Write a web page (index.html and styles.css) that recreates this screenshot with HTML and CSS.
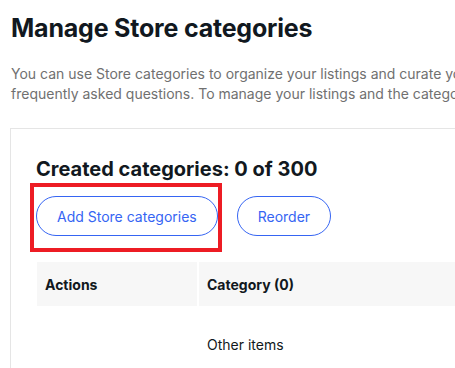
FILE: index.html
```html
<!DOCTYPE html>
<html lang="en">
<head>
    <meta charset="UTF-8">
    <meta name="viewport" content="width=device-width, initial-scale=1.0">
    <title>Manage Store categories</title>
    <link rel="stylesheet" href="styles.css">
</head>
<body>

    <div class="page">
        <h1 class="title">Manage Store categories</h1>
        <p class="intro">You can use Store categories to organize your listings and curate your Store with answers to<br>frequently asked questions. To manage your listings and the categories they appear in, go to Seller Hub.</p>

        <div class="card">
            <h2 class="count">Created categories: 0 of 300</h2>
            <div class="actions-bar">
                <span class="highlight">
                    <button class="pill">Add Store categories</button>
                </span>
                <button class="pill">Reorder</button>
            </div>

            <table class="cat-table">
                <thead>
                    <tr>
                        <th class="col-actions">Actions</th>
                        <th>Category (0)</th>
                    </tr>
                </thead>
                <tbody>
                    <tr>
                        <td></td>
                        <td>Other items</td>
                    </tr>
                </tbody>
            </table>
        </div>
    </div>

</body>
</html>
```

FILE: styles.css
```css
body {
    font-family: Inter, "Liberation Sans", sans-serif;
    background-color: #ffffff;
    color: #111820;
    margin: 0;
    padding: 0;
    overflow: hidden;
}
.page {
    padding: 0 0 0 10px;
    width: 700px;
}
.title {
    font-size: 25px;
    font-weight: 700;
    line-height: 32px;
    margin: 12px 0 0 1px;
    letter-spacing: -0.2px;
}
.intro {
    font-size: 14px;
    line-height: 20px;
    color: #707070;
    margin: 20px 0 0 1px;
    white-space: nowrap;
}
.card {
    border: 1px solid #e5e5e5;
    border-right: none;
    margin-top: 24px;
    padding: 26px 0 0 25px;
    height: 300px;
}
.count {
    font-size: 20px;
    font-weight: 700;
    line-height: 28px;
    margin: 0;
}
.actions-bar {
    display: flex;
    align-items: center;
    gap: 19px;
    margin-top: 13px;
}
.highlight {
    position: relative;
    display: inline-flex;
}
/* red annotation frame drawn over the first button */
.highlight::after {
    content: "";
    position: absolute;
    top: -13px;
    left: -6px;
    right: -4px;
    bottom: -16px;
    border: 4px solid #ed1c24;
    pointer-events: none;
}
.pill {
    font-family: inherit;
    font-size: 14px;
    height: 40px;
    padding: 0 20px;
    border: 1px solid #3665f3;
    border-radius: 20px;
    background: #ffffff;
    color: #3665f3;
    cursor: pointer;
}
.cat-table {
    margin-top: 26px;
    border-collapse: separate;
    border-spacing: 2px 0;
    margin-left: -1px;
    width: 640px;
    font-size: 14px;
}
.cat-table th {
    background-color: #f7f7f7;
    text-align: left;
    font-weight: 700;
    height: 44px;
    padding: 0 8px;
}
.cat-table .col-actions {
    width: 144px;
}
.cat-table td {
    height: 76px;
    padding: 0 8px;
    vertical-align: middle;
}
```
